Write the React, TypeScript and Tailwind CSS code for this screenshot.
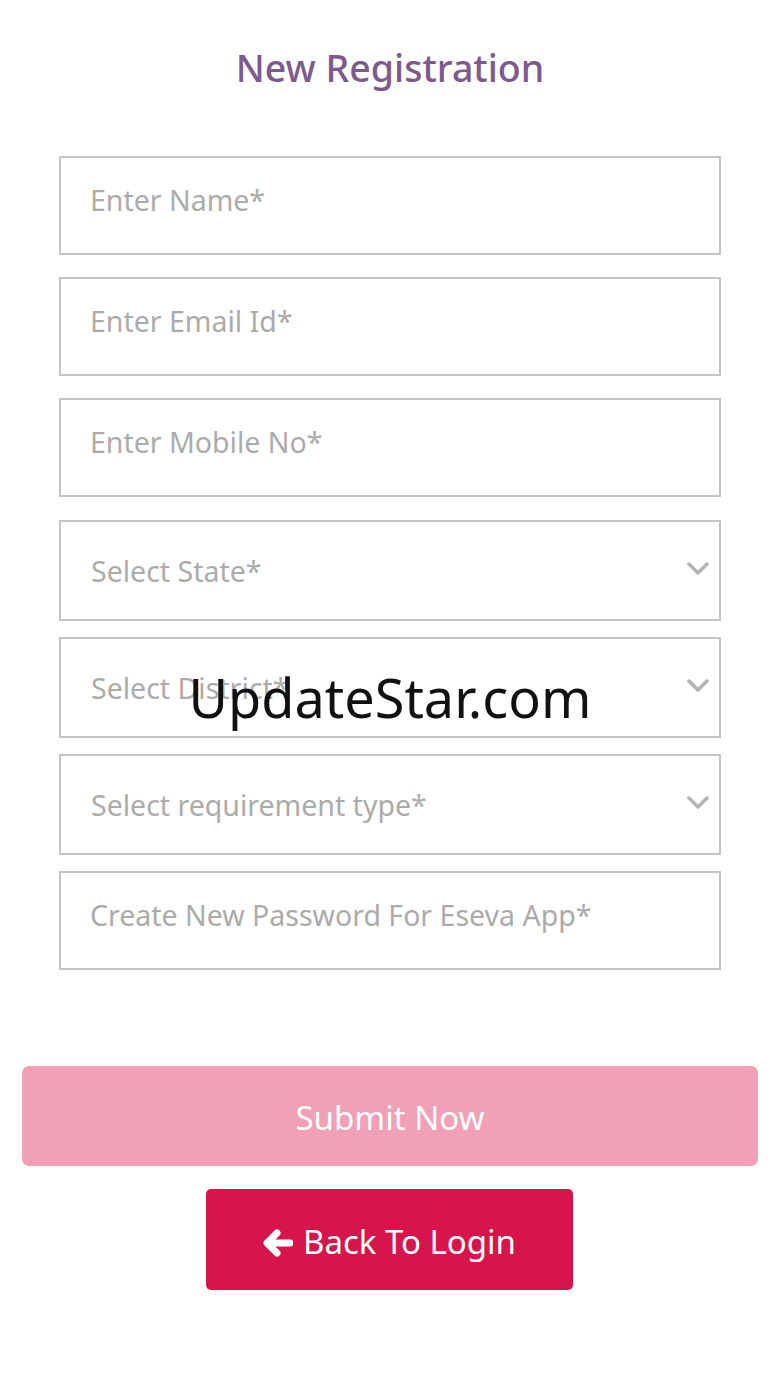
const font = { fontFamily: '"Noto Sans", "Open Sans", sans-serif' };

function TextField({ placeholder }: { placeholder: string }) {
  return (
    <div className="h-[99px] border-2 border-[#c4c4c4] flex items-center pl-[29px] pb-[10px]">
      <span className="text-[28.5px] text-[#ababab]">{placeholder}</span>
    </div>
  );
}

function SelectField({ placeholder }: { placeholder: string }) {
  return (
    <div className="h-[101px] border-2 border-[#c4c4c4] flex items-center justify-between pl-[30px] pr-[10px]">
      <span className="text-[28.5px] text-[#ababab] mt-[2px]">{placeholder}</span>
      <svg width="22" height="14" viewBox="0 0 22 14" className="mt-[-4px]">
        <path d="M2 2 L11 11 L20 2" fill="none" stroke="#b3b3b3" strokeWidth="3.5" strokeLinecap="round" strokeLinejoin="round" />
      </svg>
    </div>
  );
}

export default function App() {
  return (
    <div className="relative w-[780px] h-[1386px] bg-white" style={font}>
      <h1 className="pt-[43px] text-center text-[37.5px] leading-[50px] text-[#7d5a8e] font-medium">
        New Registration
      </h1>

      <div className="mt-[63px] mx-[59px] flex flex-col">
        <TextField placeholder="Enter Name*" />
        <div className="h-[22px]" />
        <TextField placeholder="Enter Email Id*" />
        <div className="h-[22px]" />
        <TextField placeholder="Enter Mobile No*" />
        <div className="h-[23px]" />
        <SelectField placeholder="Select State*" />
        <div className="h-[16px]" />
        <SelectField placeholder="Select District*" />
        <div className="h-[16px]" />
        <SelectField placeholder="Select requirement type*" />
        <div className="h-[16px]" />
        <TextField placeholder="Create New Password For Eseva App*" />
      </div>

      <div className="mt-[96px] mx-[22px]">
        <button className="w-full h-[100px] rounded-[7px] bg-[#f0a1b7] text-white text-[33px] pt-[4px]">
          Submit Now
        </button>
      </div>

      <div className="mt-[23px] flex justify-center">
        <button className="ml-[-1px] w-[367px] h-[101px] rounded-[5px] bg-[#d8144c] text-white text-[33px] flex items-center justify-center gap-[10px] pt-[4px]">
          <svg width="30" height="28" viewBox="0 0 30 28" className="mt-[2px]">
            <path d="M27 14 H6 M14 4 L4 14 L14 24" fill="none" stroke="#ffffff" strokeWidth="7" strokeLinecap="round" strokeLinejoin="round" />
          </svg>
          <span>Back To Login</span>
        </button>
      </div>

      <div className="absolute left-0 right-0 top-[665px] text-center text-[54px] leading-[64px] text-[#111] pointer-events-none">
        UpdateStar.com
      </div>
    </div>
  );
}
